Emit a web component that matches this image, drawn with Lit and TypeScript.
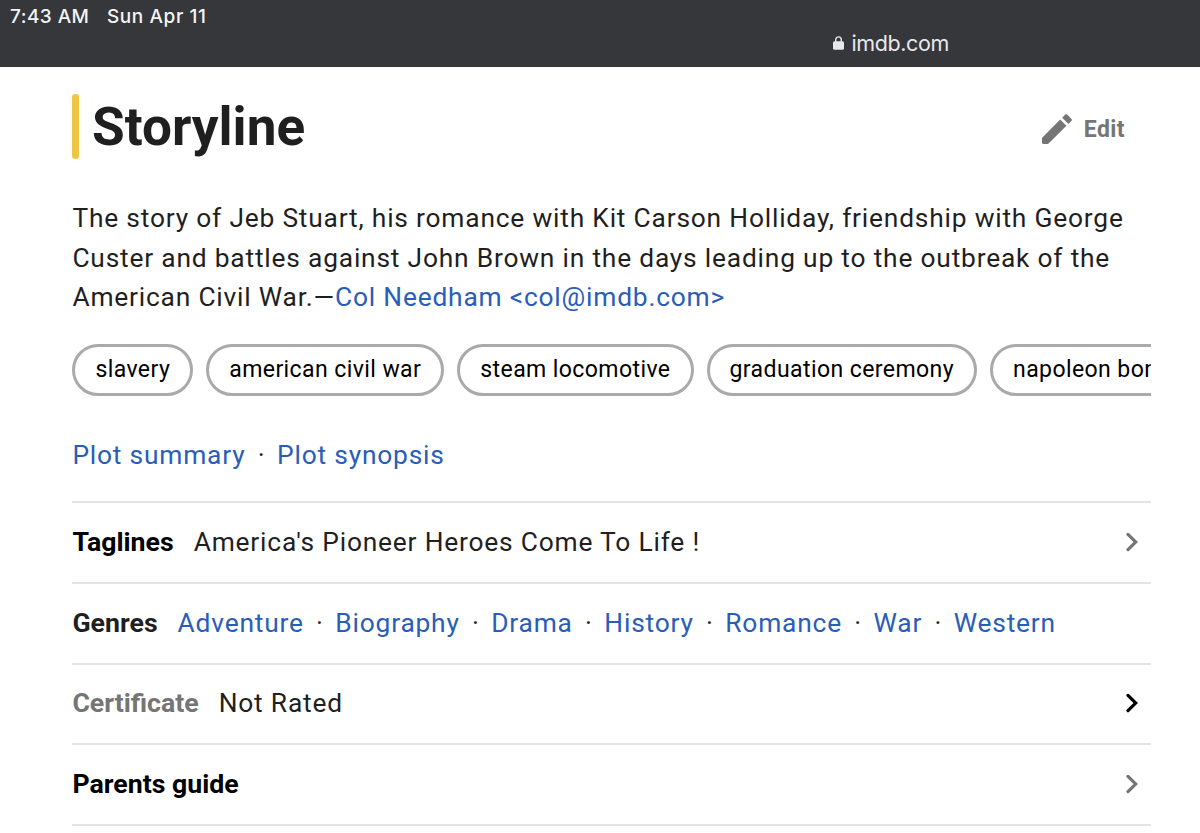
import { LitElement, html, css, nothing } from "lit";
import { customElement, property } from "lit/decorators.js";

@customElement("status-bar")
export class StatusBar extends LitElement {
  static styles = css`
    :host {
      display: block;
      height: 67px;
      box-sizing: border-box;
      overflow: hidden;
      background: #36373b;
      border-bottom: 1px solid #343338;
      color: #f4f4f6;
      font-family: Inter, "Liberation Sans", sans-serif;
    }

    .clock {
      display: flex;
      gap: 17.5px;
      padding: 6px 0 0 10px;
      font-size: 19px;
      line-height: 22px;
      font-weight: 500;
    }

    .time {
      letter-spacing: 0.45px;
    }

    .date {
      letter-spacing: 0.6px;
    }

    .address {
      display: flex;
      align-items: center;
      gap: 7.5px;
      padding: 1px 0 0 833px;
      font-size: 21.5px;
      line-height: 28px;
      letter-spacing: -0.4px;
      color: #e8e8ec;
    }

    .lock {
      display: block;
      width: 11px;
      height: 14px;
    }
  `;

  render() {
    return html`
      <div class="clock">
        <span class="time">7:43 AM</span>
        <span class="date">Sun Apr 11</span>
      </div>
      <div class="address">
        <svg class="lock" viewBox="0 0 11 14">
          <rect x="0" y="5.2" width="11" height="8.5" rx="1.5" fill="currentColor" />
          <path d="M2.7 6V3.8a2.8 2.9 0 0 1 5.6 0V6" fill="none" stroke="currentColor" stroke-width="1.4" />
        </svg>
        <span class="host">imdb.com</span>
      </div>
    `;
  }
}

@customElement("detail-row")
export class DetailRow extends LitElement {
  @property() label = "";
  @property() value = "";
  @property() tone = "";
  @property({ type: Array }) links: string[] = [];

  static styles = css`
    :host {
      display: block;
    }

    .row {
      display: flex;
      align-items: center;
      height: 80.7px;
      box-sizing: border-box;
      padding-bottom: 1.2px;
      border-top: 2px solid #e4e4e4;
      font-size: 26.35px;
      white-space: nowrap;
    }

    .label {
      margin-right: 20px;
      font-size: 26.7px;
      font-weight: 700;
      letter-spacing: 0;
      color: #000;
    }

    .label.soft {
      color: #1f1f1f;
    }

    .label.muted {
      color: #757575;
    }

    .value {
      letter-spacing: 0.8px;
      color: #1f1f1f;
    }

    .link {
      color: #2a5db8;
    }

    .dot {
      padding: 0 11.6px 0 12.3px;
    }

    .chevron {
      display: block;
      width: 12px;
      height: 20px;
      margin: 0 13px 0 auto;
      color: #757575;
    }

    .chevron.dark {
      color: #000;
    }
  `;

  renderLinks() {
    return this.links.map(
      (link, i) => html`${i ? html`<span class="dot">·</span>` : nothing}<span class="link">${link}</span>`
    );
  }

  render() {
    const muted = this.tone === "muted";
    return html`
      <div class="row">
        <span class="label ${this.tone}">${this.label}</span>
        <span class="value">${this.links.length ? this.renderLinks() : this.value}</span>
        ${this.links.length
          ? nothing
          : html`<svg class="chevron ${muted ? "dark" : ""}" viewBox="0 0 12 20">
              <path
                d="M2 2.4L9.8 10L2 17.6"
                fill="none"
                stroke="currentColor"
                stroke-width="3.2"
                stroke-linecap="round"
              />
            </svg>`}
      </div>
    `;
  }
}

@customElement("app-root")
export class AppRoot extends LitElement {
  keywords = [
    "slavery",
    "american civil war",
    "steam locomotive",
    "graduation ceremony",
    "napoleon bonaparte",
  ];

  genres = ["Adventure", "Biography", "Drama", "History", "Romance", "War", "Western"];

  static styles = css`
    :host {
      display: block;
      height: 833px;
      overflow: hidden;
      background: #fff;
      color: #1f1f1f;
      font-family: Roboto, "Liberation Sans", sans-serif;
    }

    .storyline {
      padding: 27px 49px 0 72.4px;
    }

    .heading {
      display: flex;
      align-items: center;
      height: 65px;
    }

    .bar {
      width: 6.6px;
      height: 65px;
      margin-right: 13px;
      border-radius: 3.3px;
      background: #f0c544;
    }

    .title {
      margin: 0;
      font-size: 53.1px;
      line-height: 64px;
      font-weight: 700;
    }

    .edit {
      display: flex;
      align-items: center;
      gap: 12px;
      margin: 5px 26px 0 auto;
      color: #757575;
      font-size: 23px;
      font-weight: 700;
      letter-spacing: 0.4px;
    }

    .pencil {
      display: block;
      width: 30px;
      height: 30px;
      margin-top: -1px;
    }

    .plot {
      margin: 40px 0 0;
      font-size: 26.35px;
      line-height: 39.5px;
      letter-spacing: 0.8px;
      white-space: nowrap;
    }

    .link {
      color: #2a5db8;
    }

    .chips {
      display: flex;
      gap: 13px;
      margin-top: 26px;
      overflow: hidden;
    }

    .chip {
      flex: none;
      height: 52px;
      box-sizing: border-box;
      padding: 0 20px;
      border: 3px solid #aaa;
      border-radius: 26px;
      color: #000;
      font-size: 23.06px;
      line-height: 45px;
      letter-spacing: 0.4px;
    }

    .summaries {
      height: 105.8px;
      box-sizing: border-box;
      padding-top: 40.5px;
      font-size: 26.35px;
      line-height: 39.5px;
      letter-spacing: 0.8px;
    }

    .dot {
      padding: 0 11.6px 0 12.3px;
    }

    .end {
      border-top: 2px solid #e4e4e4;
    }
  `;

  render() {
    return html`
      <status-bar></status-bar>
      <section class="storyline">
        <div class="heading">
          <span class="bar"></span>
          <h1 class="title">Storyline</h1>
          <div class="edit">
            <svg class="pencil" viewBox="0 0 30 30">
              <path
                d="M0 24.3V28.6Q0 30 1.4 30H5.7Q6.2 30 6.6 29.6L24.4 11.8L18.2 5.6L0.4 23.4Q0 23.8 0 24.3ZM29.5 6.8Q30.3 6 29.5 5L25.2 0.6Q24.2-0.2 23.3 0.6L20.2 3.7L26.4 9.9Z"
                fill="currentColor"
              />
            </svg>
            <span>Edit</span>
          </div>
        </div>
        <p class="plot">
          The story of Jeb Stuart, his romance with Kit Carson Holliday, friendship with George<br />
          Custer and battles against John Brown in the days leading up to the outbreak of the<br />
          American Civil War.—<span class="link">Col Needham &lt;col@imdb.com&gt;</span>
        </p>
        <div class="chips">
          ${this.keywords.map((keyword) => html`<span class="chip">${keyword}</span>`)}
        </div>
        <div class="summaries">
          <span class="link">Plot summary</span><span class="dot">·</span><span class="link">Plot synopsis</span>
        </div>
        <detail-row label="Taglines" value="America's Pioneer Heroes Come To Life !"></detail-row>
        <detail-row label="Genres" tone="soft" .links=${this.genres}></detail-row>
        <detail-row label="Certificate" tone="muted" value="Not Rated"></detail-row>
        <detail-row label="Parents guide"></detail-row>
        <div class="end"></div>
      </section>
    `;
  }
}
